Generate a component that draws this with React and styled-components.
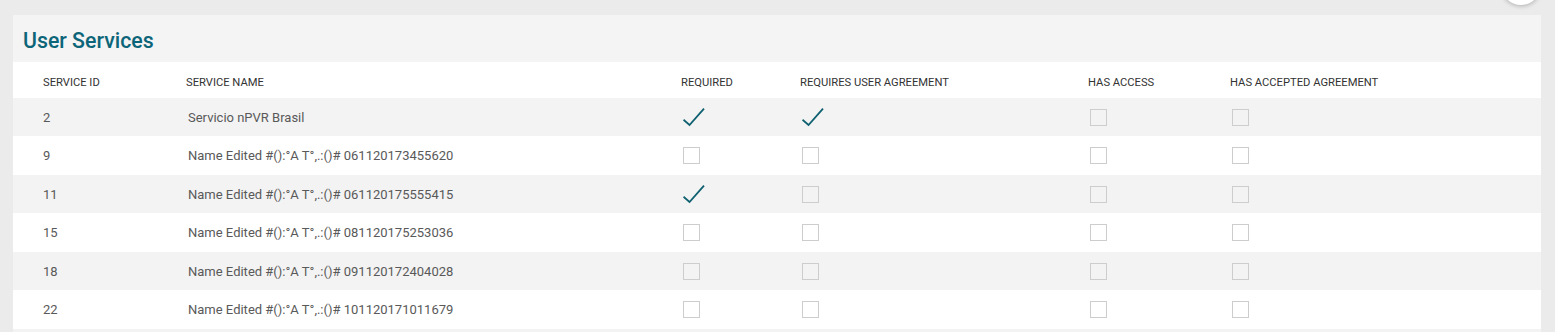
import React from "react";
import styled, { createGlobalStyle } from "styled-components";

const Global = createGlobalStyle`
  html, body { margin: 0; padding: 0; background: #ebebeb; overflow: hidden; }
  body { font-family: Roboto, "Liberation Sans", Arial, sans-serif; }
`;

const Page = styled.div`
  position: relative;
  padding: 15px 14px 0 13px;
  height: 332px;
  box-sizing: border-box;
`;

const Fab = styled.div`
  position: absolute;
  top: -35px;
  left: 1501px;
  width: 40px;
  height: 40px;
  border-radius: 50%;
  background: #fff;
  box-shadow: 0 1px 4px rgba(0, 0, 0, 0.25);
`;

const Card = styled.section`
  background: #f4f4f4;
  width: 1528px;
`;

const CardHeader = styled.header`
  height: 47px;
  box-sizing: border-box;
  padding: 14px 10px 0 10px;
`;

const Title = styled.h2`
  margin: 0;
  font-size: 21.3px;
  line-height: 24px;
  font-weight: 500;
  color: #0c6578;
`;

const COLS = "143px 495px 119px 288px 142px 1fr";

const HeadRow = styled.div`
  display: grid;
  grid-template-columns: ${COLS};
  align-items: center;
  height: 36px;
  box-sizing: border-box;
  padding: 5px 0 0 30px;
  background: #fff;
`;

const HeadCell = styled.div`
  font-size: 11.2px;
  color: #333;
  text-transform: uppercase;
  white-space: nowrap;
`;

const Row = styled.div`
  display: grid;
  grid-template-columns: ${COLS};
  align-items: center;
  height: ${(p) => p.$h}px;
  padding-left: 30px;
  background: ${(p) => (p.$alt ? "#f3f3f3" : "#fff")};
`;

const Cell = styled.div`
  font-size: 13px;
  color: #595959;
  white-space: nowrap;
  padding-left: ${(p) => (p.$shift ? 2 : 0)}px;
  display: flex;
  align-items: center;
`;

const Box = styled.span`
  display: inline-block;
  width: 15px;
  height: 15px;
  border: 1px solid #cdcdcd;
  background: transparent;
`;

const Check = () => (
  <svg width="22" height="19" viewBox="0 0 22 19" style={{ display: "block" }}>
    <path d="M0.5 11.8 L6.5 17 L21 0.6" fill="none" stroke="#0e6070" strokeWidth="1.8" />
  </svg>
);

const Flag = ({ on }) => (on ? <Check /> : <Box />);

const data = [
  { id: 2, name: "Servicio nPVR Brasil", req: true, agr: true },
  { id: 9, name: "Name Edited #():°A T°,.:()# 061120173455620" },
  { id: 11, name: "Name Edited #():°A T°,.:()# 061120175555415", req: true },
  { id: 15, name: "Name Edited #():°A T°,.:()# 081120175253036" },
  { id: 18, name: "Name Edited #():°A T°,.:()# 091120172404028" },
  { id: 22, name: "Name Edited #():°A T°,.:()# 101120171011679" },
];

const heights = [38, 39, 38, 39, 38, 39];

export default function App() {
  return (
    <>
      <Global />
      <Page>
        <Fab />
        <Card>
          <CardHeader>
            <Title>User Services</Title>
          </CardHeader>
          <HeadRow>
            <HeadCell>Service ID</HeadCell>
            <HeadCell>Service Name</HeadCell>
            <HeadCell>Required</HeadCell>
            <HeadCell>Requires User Agreement</HeadCell>
            <HeadCell>Has Access</HeadCell>
            <HeadCell>Has Accepted Agreement</HeadCell>
          </HeadRow>
          {data.map((r, i) => (
            <Row key={r.id} $alt={i % 2 === 0} $h={heights[i]}>
              <Cell>{r.id}</Cell>
              <Cell $shift>{r.name}</Cell>
              <Cell $shift><Flag on={r.req} /></Cell>
              <Cell $shift><Flag on={r.agr} /></Cell>
              <Cell $shift><Flag /></Cell>
              <Cell $shift><Flag /></Cell>
            </Row>
          ))}
          <Row $alt $h={10} />
        </Card>
      </Page>
    </>
  );
}
